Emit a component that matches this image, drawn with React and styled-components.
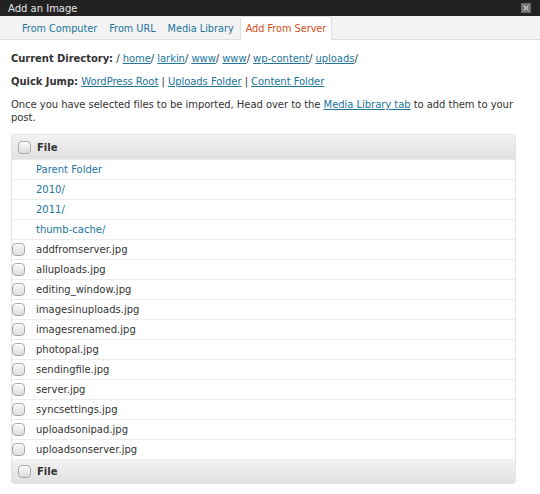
import React from 'react';
import styled, { createGlobalStyle } from 'styled-components';

const GlobalStyle = createGlobalStyle`
  html, body {
    margin: 0;
    padding: 0;
    background: #fff;
  }
  body {
    font-family: "DejaVu Sans", Verdana, sans-serif;
    font-size: 9.5px;
    color: #333;
  }
`;

const Window = styled.div`
  width: 540px;
  height: 494px;
  background: #fff;
  overflow: hidden;
`;

const TitleBar = styled.div`
  height: 16px;
  background: #222;
  display: flex;
  align-items: center;
  justify-content: space-between;
  padding: 0 9px 0 8px;
  color: #e6e6e6;
  font-size: 10px;
`;

const CloseBox = styled.div`
  width: 10px;
  height: 10px;
  background: #6f6f6f;
  border-radius: 1px;
  display: flex;
  align-items: center;
  justify-content: center;
`;

const Tabs = styled.div`
  height: 24px;
  background: #f3f3f3;
  border-bottom: 1px solid #dfdfdf;
  display: flex;
  align-items: flex-end;
  padding-left: 16px;
  box-sizing: border-box;
`;

const Tab = styled.div`
  height: 22px;
  display: flex;
  align-items: center;
  padding: 0 5px;
  margin-bottom: -1px;
  font-size: 9.7px;
  color: ${({ active }) => (active ? '#d54e21' : '#21759b')};
  background: ${({ active }) => (active ? '#fff' : 'transparent')};
  border: 1px solid ${({ active }) => (active ? '#dfdfdf' : 'transparent')};
  border-bottom-color: ${({ active }) => (active ? '#fff' : 'transparent')};
  border-radius: 3px 3px 0 0;
`;

const Body = styled.div`
  padding: 12px 11px 0 11px;
`;

const Line = styled.p`
  margin: 0 0 10px;
  line-height: 13px;
  font-size: 10px;
  letter-spacing: -0.05px;
`;

const Label = styled.strong`
  font-weight: bold;
  color: #333;
`;

const Link = styled.a`
  color: #21759b;
  text-decoration: underline;
  cursor: pointer;
`;

const Table = styled.div`
  width: 503px;
  margin-top: 7px;
  border: 1px solid #e4e4e4;
  border-radius: 3px;
  overflow: hidden;
`;

const HeadRow = styled.div`
  height: 24px;
  display: flex;
  align-items: center;
  gap: 6px;
  padding-left: 6px;
  background: linear-gradient(to bottom, #f2f2f2, #e1e1e1);
  font-weight: bold;
  font-size: 10px;
  color: #333;
`;

const Row = styled.div`
  height: 20px;
  display: flex;
  align-items: center;
  border-top: 1px solid #ececec;
  box-sizing: border-box;
  padding-left: ${({ folder }) => (folder ? '24px' : '0')};
  font-size: 10px;
  color: ${({ folder }) => (folder ? '#21759b' : '#333')};
  &:first-of-type {
    border-top: none;
  }
`;

const CheckCell = styled.div`
  width: 24px;
  display: flex;
  justify-content: flex-start;
`;

const Check = styled.span`
  display: inline-block;
  width: 11px;
  height: 11px;
  border: 1px solid #a9a9a9;
  border-radius: 4px;
  background: linear-gradient(to bottom, #fafafa, #dcdcdc);
  box-shadow: inset 0 1px 1px rgba(255, 255, 255, 0.8);
`;

const folders = ['Parent Folder', '2010/', '2011/', 'thumb-cache/'];
const files = [
  'addfromserver.jpg',
  'alluploads.jpg',
  'editing_window.jpg',
  'imagesinuploads.jpg',
  'imagesrenamed.jpg',
  'photopal.jpg',
  'sendingfile.jpg',
  'server.jpg',
  'syncsettings.jpg',
  'uploadsonipad.jpg',
  'uploadsonserver.jpg',
];

const dirs = ['home', 'larkin', 'www', 'www', 'wp-content', 'uploads'];

export default function App() {
  return (
    <Window>
      <GlobalStyle />
      <TitleBar>
        <span>Add an Image</span>
        <CloseBox>
          <svg width="8" height="8" viewBox="0 0 8 8">
            <path d="M1.5 1.5 L6.5 6.5 M6.5 1.5 L1.5 6.5" stroke="#bdbdbd" strokeWidth="1.6" />
          </svg>
        </CloseBox>
      </TitleBar>
      <Tabs>
        <Tab>From Computer</Tab>
        <Tab>From URL</Tab>
        <Tab>Media Library</Tab>
        <Tab active>Add From Server</Tab>
      </Tabs>
      <Body>
        <Line>
          <Label>Current Directory:</Label> /{' '}
          {dirs.map((d, i) => (
            <React.Fragment key={i}>
              <Link>{d}</Link>/{i < dirs.length - 1 ? ' ' : ''}
            </React.Fragment>
          ))}
        </Line>
        <Line>
          <Label>Quick Jump:</Label> <Link>WordPress Root</Link> | <Link>Uploads Folder</Link> |{' '}
          <Link>Content Folder</Link>
        </Line>
        <Line>
          Once you have selected files to be imported, Head over to the <Link>Media Library tab</Link> to add
          them to your
          <br />
          post.
        </Line>
        <Table>
          <HeadRow>
            <Check />
            File
          </HeadRow>
          {folders.map((f) => (
            <Row folder key={f}>
              {f}
            </Row>
          ))}
          {files.map((f) => (
            <Row key={f}>
              <CheckCell>
                <Check />
              </CheckCell>
              {f}
            </Row>
          ))}
          <HeadRow>
            <Check />
            File
          </HeadRow>
        </Table>
      </Body>
    </Window>
  );
}
